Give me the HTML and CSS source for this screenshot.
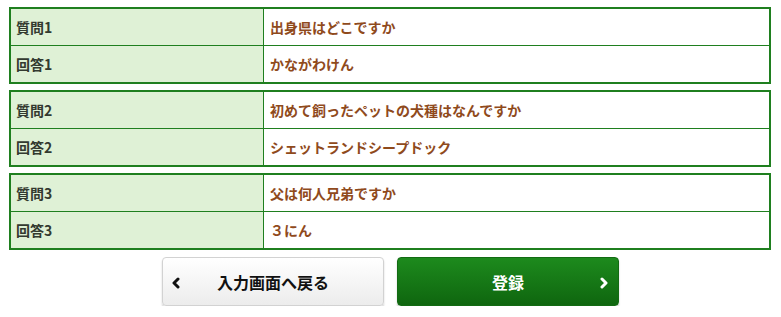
FILE: index.html
```html
<!DOCTYPE html>
<html lang="ja">
<head>
<meta charset="utf-8">
<link rel="stylesheet" href="styles.css">
</head>
<body>
<div class="page">
  <table class="qa">
    <tr><th>質問1</th><td>出身県はどこですか</td></tr>
    <tr><th>回答1</th><td>かながわけん</td></tr>
  </table>
  <table class="qa">
    <tr><th>質問2</th><td>初めて飼ったペットの犬種はなんですか</td></tr>
    <tr><th>回答2</th><td>シェットランドシープドック</td></tr>
  </table>
  <table class="qa">
    <tr><th>質問3</th><td>父は何人兄弟ですか</td></tr>
    <tr><th>回答3</th><td>３にん</td></tr>
  </table>
  <div class="actions">
    <button class="btn btn-back" type="button">
      <svg class="chev chev-left" width="10" height="12" viewBox="0 0 10 12"><path d="M7 2 L3 6 L7 10" fill="none" stroke="#111" stroke-width="3" stroke-linecap="round" stroke-linejoin="round"/></svg>
      <span>入力画面へ戻る</span>
    </button>
    <button class="btn btn-submit" type="button">
      <span>登録</span>
      <svg class="chev chev-right" width="10" height="12" viewBox="0 0 10 12"><path d="M3 2 L7 6 L3 10" fill="none" stroke="#fff" stroke-width="3" stroke-linecap="round" stroke-linejoin="round"/></svg>
    </button>
  </div>
</div>
</body>
</html>
```

FILE: styles.css
```css
html, body {
  margin: 0;
  padding: 0;
  background: #fff;
}
body {
  font-family: "Noto Sans CJK JP", "Noto Sans", sans-serif;
  font-size: 14px;
}
.page {
  padding: 7px 10px 0 9px;
}
.qa {
  width: 762px;
  border-collapse: separate;
  border-spacing: 0;
  border: 2px solid #1f7f1f;
  margin-bottom: 6px;
  table-layout: fixed;
}
.qa th, .qa td {
  height: 36px;
  padding: 0;
  font-weight: bold;
  text-align: left;
  vertical-align: middle;
  line-height: 20px;
}
.qa tr:first-child th, .qa tr:first-child td {
  border-bottom: 1px solid #1f7f1f;
}
.qa th {
  width: 247px;
  background: #dff1d6;
  color: #333a30;
  padding-left: 5px;
  border-right: 1px solid #1f7f1f;
}
.qa td {
  color: #8f4a1c;
  padding-left: 6px;
}
.actions {
  display: flex;
  justify-content: center;
  gap: 13px;
  padding-top: 1px;
  margin-left: -9px;
  margin-right: -10px;
}
.btn {
  position: relative;
  width: 222px;
  height: 49px;
  border-radius: 4px;
  font-family: "Noto Sans CJK JP", "Noto Sans", sans-serif;
  font-size: 16px;
  font-weight: bold;
  display: flex;
  align-items: center;
  justify-content: center;
  padding: 0;
  cursor: pointer;
}
.btn-back {
  background: linear-gradient(#ffffff, #ececec);
  border: 1px solid #d2d2d2;
  color: #111;
  box-shadow: 0 2px 2px rgba(0,0,0,0.18);
}
.btn-submit {
  background: linear-gradient(#1d8a1d, #0f660f);
  border: 1px solid #136b13;
  color: #fff;
  box-shadow: 0 2px 2px rgba(0,0,0,0.2);
}
.chev {
  position: absolute;
  top: 19px;
}
.chev-left { left: 8px; }
.chev-right { right: 9px; }
```
